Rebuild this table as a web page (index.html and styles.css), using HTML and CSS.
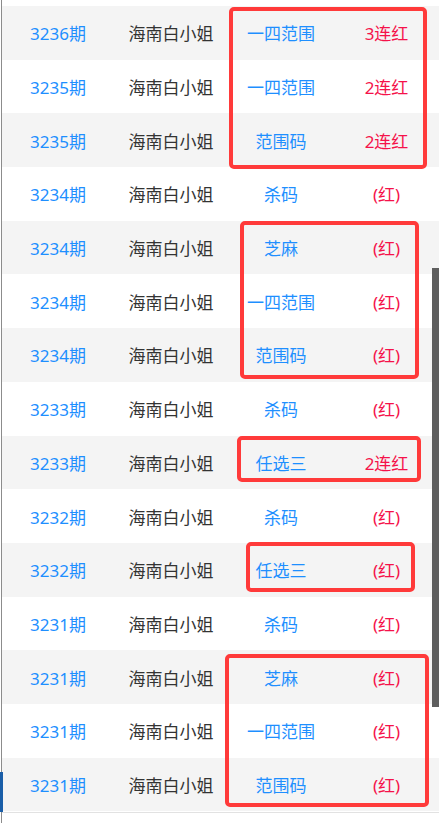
FILE: index.html
```html
<!DOCTYPE html>
<html lang="zh-CN">
<head>
    <meta charset="UTF-8">
    <meta name="viewport" content="width=device-width, initial-scale=1.0">
    <title>开奖记录</title>
    <link rel="stylesheet" href="styles.css">
</head>
<body>

    <div class="page">
        <div class="list">
            <div class="row"><span class="issue">3236期</span><span class="name">海南白小姐</span><span class="type">一四范围</span><span class="result">3连红</span></div>
            <div class="row"><span class="issue">3235期</span><span class="name">海南白小姐</span><span class="type">一四范围</span><span class="result">2连红</span></div>
            <div class="row"><span class="issue">3235期</span><span class="name">海南白小姐</span><span class="type">范围码</span><span class="result">2连红</span></div>
            <div class="row"><span class="issue">3234期</span><span class="name">海南白小姐</span><span class="type">杀码</span><span class="result">(红)</span></div>
            <div class="row"><span class="issue">3234期</span><span class="name">海南白小姐</span><span class="type">芝麻</span><span class="result">(红)</span></div>
            <div class="row"><span class="issue">3234期</span><span class="name">海南白小姐</span><span class="type">一四范围</span><span class="result">(红)</span></div>
            <div class="row"><span class="issue">3234期</span><span class="name">海南白小姐</span><span class="type">范围码</span><span class="result">(红)</span></div>
            <div class="row"><span class="issue">3233期</span><span class="name">海南白小姐</span><span class="type">杀码</span><span class="result">(红)</span></div>
            <div class="row"><span class="issue">3233期</span><span class="name">海南白小姐</span><span class="type">任选三</span><span class="result">2连红</span></div>
            <div class="row"><span class="issue">3232期</span><span class="name">海南白小姐</span><span class="type">杀码</span><span class="result">(红)</span></div>
            <div class="row"><span class="issue">3232期</span><span class="name">海南白小姐</span><span class="type">任选三</span><span class="result">(红)</span></div>
            <div class="row"><span class="issue">3231期</span><span class="name">海南白小姐</span><span class="type">杀码</span><span class="result">(红)</span></div>
            <div class="row"><span class="issue">3231期</span><span class="name">海南白小姐</span><span class="type">芝麻</span><span class="result">(红)</span></div>
            <div class="row"><span class="issue">3231期</span><span class="name">海南白小姐</span><span class="type">一四范围</span><span class="result">(红)</span></div>
            <div class="row"><span class="issue">3231期</span><span class="name">海南白小姐</span><span class="type">范围码</span><span class="result">(红)</span></div>
        </div>
        <div class="bottom-line"></div>

        <!-- hand-drawn marks over the list -->
        <div class="mark mark-1"></div>
        <div class="mark mark-2"></div>
        <div class="mark mark-3"></div>
        <div class="mark mark-4"></div>
        <div class="mark mark-5"></div>

        <div class="thumb"></div>
        <div class="edge-tab"></div>
    </div>

</body>
</html>
```

FILE: styles.css
```css
html, body {
    margin: 0;
    padding: 0;
    background: #fff;
}

body {
    font-family: 'Noto Sans', 'Noto Sans CJK SC', sans-serif;
    font-size: 17px;
    width: 439px;
    height: 823px;
    overflow: hidden;
}

.page {
    position: relative;
    height: 823px;
    margin-left: 1px;
    border-left: 1px solid #8c8c8c;
}

.list {
    padding-top: 6px;
}

.row {
    display: grid;
    grid-template-columns: 112px 114px 106px 1fr;
    align-items: center;
    height: 53.7px;
    text-align: center;
    background: #fff;
}

.row:nth-child(odd) {
    background: #f4f4f4;
}

.issue,
.type {
    color: #1e8fff;
}

.name {
    color: #333;
}

.result {
    color: #f5124a;
}

.bottom-line {
    margin-top: 1px;
    height: 1px;
    background: #e2e2e2;
}

.mark {
    position: absolute;
    box-sizing: border-box;
    border: 4px solid #ff3a3a;
    border-radius: 5px;
}

.mark-1 {
    left: 227px;
    top: 7px;
    width: 198px;
    height: 162px;
}

.mark-2 {
    left: 238px;
    top: 221px;
    width: 179px;
    height: 158px;
}

.mark-3 {
    left: 235px;
    top: 436px;
    width: 184px;
    height: 46px;
}

.mark-4 {
    left: 244px;
    top: 542px;
    width: 169px;
    height: 50px;
}

.mark-5 {
    left: 223px;
    top: 654px;
    width: 204px;
    height: 153px;
}

.thumb {
    position: absolute;
    right: 0;
    top: 268px;
    width: 7px;
    height: 439px;
    background: #5e5e5e;
}

.edge-tab {
    position: absolute;
    left: -2px;
    top: 772px;
    width: 3px;
    height: 40px;
    background: #1a5ea8;
}
```
